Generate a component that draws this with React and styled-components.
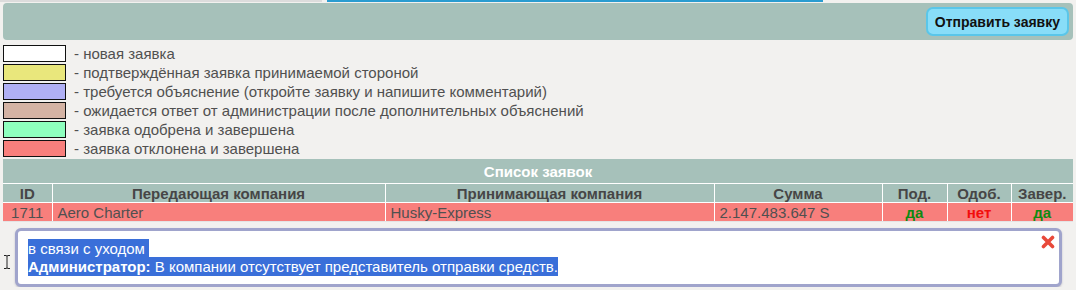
import React from "react";
import styled, { createGlobalStyle } from "styled-components";

const GlobalStyle = createGlobalStyle`
  html, body {
    margin: 0;
    padding: 0;
    background: #f2f1ef;
    font-family: "Liberation Sans", Arial, sans-serif;
    font-size: 15px;
    color: #555;
  }
`;

const Page = styled.div`
  position: relative;
  padding: 0 3px;
`;

const TabStrip = styled.div`
  display: flex;
  height: 2px;
  margin: 0 -3px;
`;

const TabLine = styled.div`
  width: ${(p) => p.w}px;
  margin-left: ${(p) => p.gap || 0}px;
  background: ${(p) => p.color};
`;

const Toolbar = styled.div`
  display: flex;
  justify-content: flex-end;
  align-items: center;
  height: 37px;
  margin-top: 1px;
  padding-right: 4px;
  background: #a6c1ba;
  border-radius: 4px;
`;

const SendButton = styled.button`
  height: 29px;
  padding: 0 7px;
  background: #88ddf8;
  border: 2px solid #5ac6e9;
  border-radius: 7px;
  font-family: "Liberation Sans", Arial, sans-serif;
  font-weight: bold;
  font-size: 14px;
  color: #111;
  cursor: pointer;
`;

const Legend = styled.div`
  margin-top: 4px;
  display: flex;
  flex-direction: column;
`;

const LegendRow = styled.div`
  display: flex;
  align-items: center;
  height: 19px;
`;

const Swatch = styled.span`
  width: 61px;
  height: 15px;
  border: 1px solid #111;
  background: ${(p) => p.color};
  margin-right: 8px;
`;

const LegendText = styled.span`
  color: #505050;
  font-size: 15px;
`;

const Table = styled.table`
  width: 100%;
  margin-top: 1px;
  border-collapse: collapse;
  table-layout: fixed;
`;

const TitleCell = styled.th`
  height: 24px;
  padding: 0;
  background: #a6c1ba;
  color: #fff;
  font-weight: bold;
  font-size: 15px;
  border-bottom: 1px solid #fff;
`;

const HeadCell = styled.th`
  height: 18px;
  padding: 0;
  background: #a6c1ba;
  color: #464646;
  font-weight: bold;
  font-size: 15px;
  border-right: 1px solid #fff;
  border-bottom: 1px solid #fff;
  &:last-child {
    border-right: none;
  }
`;

const Cell = styled.td`
  height: 18px;
  padding: 0 ${(p) => (p.center ? 0 : 5)}px;
  background: #f87f7c;
  color: ${(p) => p.tone || "#505050"};
  font-weight: ${(p) => (p.tone ? "bold" : "normal")};
  text-align: ${(p) => (p.center ? "center" : "left")};
  font-size: 15px;
  line-height: 17px;
  border-right: 1px solid #fff;
  border-bottom: 1px solid #e4e4e4;
  white-space: nowrap;
  &:last-child {
    border-right: none;
  }
`;

const Note = styled.div`
  position: relative;
  margin: 6px 11px 0 12px;
  padding: 9px 10px 8px;
  background: #fff;
  border: 3px solid #a0a4cc;
  border-radius: 6px;
  box-shadow: 0 1px 2px rgba(80, 80, 120, 0.35);
  font-size: 15px;
  line-height: 18px;
`;

const Selected = styled.span`
  background: #3a6fd9;
  color: #fff;
  padding: 1px 0;
`;

const CloseIcon = styled.svg`
  position: absolute;
  top: 4px;
  right: 4px;
`;

const Cursor = styled.svg`
  position: absolute;
  left: 3px;
  top: 254px;
`;

const legend = [
  ["#ffffff", "новая заявка"],
  ["#e9e77c", "подтверждённая заявка принимаемой стороной"],
  ["#b0b0f5", "требуется объяснение (откройте заявку и напишите комментарий)"],
  ["#d4b3a4", "ожидается ответ от администрации после дополнительных объяснений"],
  ["#8effbe", "заявка одобрена и завершена"],
  ["#f87f7c", "заявка отклонена и завершена"],
];

const cols = [49, 333, 329, 168, 65, 64, 62];

export default function App() {
  return (
    <>
      <GlobalStyle />
      <Page>
        <TabStrip>
          <TabLine w={322} color="#dcdcdc" />
          <TabLine w={496} gap={5} color="#2a9cd0" />
        </TabStrip>
        <Toolbar>
          <SendButton>Отправить заявку</SendButton>
        </Toolbar>
        <Legend>
          {legend.map(([color, text]) => (
            <LegendRow key={text}>
              <Swatch color={color} />
              <LegendText>- {text}</LegendText>
            </LegendRow>
          ))}
        </Legend>
        <Table>
          <colgroup>
            {cols.map((w, i) => (
              <col key={i} style={{ width: w }} />
            ))}
          </colgroup>
          <thead>
            <tr>
              <TitleCell colSpan={7}>Список заявок</TitleCell>
            </tr>
            <tr>
              <HeadCell>ID</HeadCell>
              <HeadCell>Передающая компания</HeadCell>
              <HeadCell>Принимающая компания</HeadCell>
              <HeadCell>Сумма</HeadCell>
              <HeadCell>Под.</HeadCell>
              <HeadCell>Одоб.</HeadCell>
              <HeadCell>Завер.</HeadCell>
            </tr>
          </thead>
          <tbody>
            <tr>
              <Cell center>1711</Cell>
              <Cell>Aero Charter</Cell>
              <Cell>Husky-Express</Cell>
              <Cell>2.147.483.647 S</Cell>
              <Cell center tone="#0e8a12">да</Cell>
              <Cell center tone="#f20d0d">нет</Cell>
              <Cell center tone="#0e8a12">да</Cell>
            </tr>
          </tbody>
        </Table>
        <Note>
          <CloseIcon width="14" height="14" viewBox="0 0 14 14">
            <path
              d="M2.5 2.5 L11.5 11.5 M11.5 2.5 L2.5 11.5"
              stroke="#e8493a"
              strokeWidth="3.6"
              strokeLinecap="round"
            />
          </CloseIcon>
          <Selected>в связи с уходом{"\u00a0"}</Selected>
          <br />
          <Selected>
            <b>Администратор:</b> В компании отсутствует представитель отправки средств.
          </Selected>
        </Note>
        <Cursor width="8" height="16" viewBox="0 0 8 16">
          <path
            d="M1 1.5 H3 Q4 1.5 4 2.5 Q4 1.5 5 1.5 H7 M4 2.5 V13.5 M1 14.5 H3 Q4 14.5 4 13.5 Q4 14.5 5 14.5 H7"
            stroke="#222"
            strokeWidth="1"
            fill="none"
          />
        </Cursor>
      </Page>
    </>
  );
}
